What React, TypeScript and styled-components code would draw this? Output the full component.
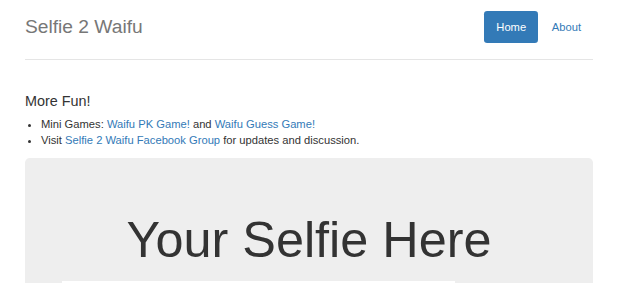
import React from "react";
import styled, { createGlobalStyle } from "styled-components";

const Global = createGlobalStyle`
  html, body { margin: 0; padding: 0; background: #fff; }
  body {
    font-family: "Liberation Sans", Arial, Helvetica, sans-serif;
    font-size: 11.2px;
    line-height: 16px;
    color: #333;
  }
  a { color: #337ab7; text-decoration: none; }
`;

const Container = styled.div`
  width: 568px;
  padding: 11px 0 0 25px;
`;

const Header = styled.header`
  display: flex;
  align-items: center;
  justify-content: space-between;
  padding-bottom: 16px;
  border-bottom: 1px solid #e5e5e5;
`;

const Brand = styled.h3`
  margin: 0;
  font-size: 19.2px;
  line-height: 32px;
  font-weight: 400;
  color: #777;
`;

const Nav = styled.nav`
  display: flex;
  gap: 1.6px;
`;

const Pill = styled.a<{ $active?: boolean }>`
  display: block;
  padding: 8px 12px;
  line-height: 16px;
  font-size: 11.2px;
  border-radius: 3.2px;
  color: ${(p) => (p.$active ? "#fff" : "#337ab7")};
  background: ${(p) => (p.$active ? "#337ab7" : "transparent")};
`;

const Section = styled.section`
  padding-top: 33px;
`;

const Heading = styled.h4`
  margin: 0 0 7px;
  font-size: 14.4px;
  line-height: 16px;
  font-weight: 400;
`;

const List = styled.ul`
  margin: 0;
  padding-left: 16px;
`;

const Jumbotron = styled.div`
  margin-top: 10px;
  height: 200px;
  border-radius: 4.8px;
  background: #eee;
  display: flex;
  flex-direction: column;
  align-items: center;
  padding-top: 54px;
  box-sizing: border-box;
`;

const Title = styled.h1`
  margin: 0;
  font-size: 50.4px;
  line-height: 55px;
  font-weight: 400;
  color: #333;
`;

const Frame = styled.div`
  margin-top: 14px;
  margin-right: 102px;
  width: 393px;
  height: 60px;
  background: #fff;
`;

export default function App() {
  return (
    <>
      <Global />
      <Container>
        <Header>
          <Brand>Selfie 2 Waifu</Brand>
          <Nav>
            <Pill $active href="#">Home</Pill>
            <Pill href="#">About</Pill>
          </Nav>
        </Header>
        <Section>
          <Heading>More Fun!</Heading>
          <List>
            <li>
              Mini Games: <a href="#">Waifu PK Game!</a> and <a href="#">Waifu Guess Game!</a>
            </li>
            <li>
              Visit <a href="#">Selfie 2 Waifu Facebook Group</a> for updates and discussion.
            </li>
          </List>
          <Jumbotron>
            <Title>Your Selfie Here</Title>
            <Frame />
          </Jumbotron>
        </Section>
      </Container>
    </>
  );
}
